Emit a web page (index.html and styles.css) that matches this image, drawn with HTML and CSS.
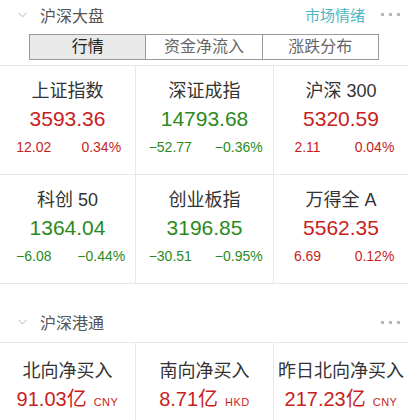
FILE: index.html
```html
<!DOCTYPE html>
<html lang="zh-CN">
<head>
    <meta charset="UTF-8">
    <meta name="viewport" content="width=device-width, initial-scale=1.0">
    <title>沪深大盘</title>
    <link rel="stylesheet" href="styles.css">
</head>
<body>
    <!-- 沪深大盘 -->
    <section class="panel">
        <div class="panel-head first">
            <svg class="chevron" width="9" height="6" viewBox="0 0 9 6"><polyline points="0.5,0.8 4.5,4.8 8.5,0.8" fill="none" stroke="#b5b5b5" stroke-width="1"/></svg>
            <span class="panel-title">沪深大盘</span>
            <a class="panel-link" href="#">市场情绪</a>
            <span class="more"><i></i><i></i><i></i></span>
        </div>

        <div class="tabs">
            <div class="tab active">行情</div>
            <div class="tab">资金净流入</div>
            <div class="tab">涨跌分布</div>
        </div>

        <div class="grid">
            <div class="cell">
                <div class="name">上证指数</div>
                <div class="price up">3593.36</div>
                <div class="change up"><span>12.02</span><span>0.34%</span></div>
            </div>
            <div class="cell">
                <div class="name">深证成指</div>
                <div class="price down">14793.68</div>
                <div class="change down"><span>&minus;52.77</span><span>&minus;0.36%</span></div>
            </div>
            <div class="cell">
                <div class="name">沪深 300</div>
                <div class="price up">5320.59</div>
                <div class="change up"><span>2.11</span><span>0.04%</span></div>
            </div>
            <div class="cell">
                <div class="name">科创 50</div>
                <div class="price down">1364.04</div>
                <div class="change down"><span>&minus;6.08</span><span>&minus;0.44%</span></div>
            </div>
            <div class="cell">
                <div class="name">创业板指</div>
                <div class="price down">3196.85</div>
                <div class="change down"><span>&minus;30.51</span><span>&minus;0.95%</span></div>
            </div>
            <div class="cell">
                <div class="name">万得全 A</div>
                <div class="price up">5562.35</div>
                <div class="change up"><span>6.69</span><span>0.12%</span></div>
            </div>
        </div>
    </section>

    <!-- 沪深港通 -->
    <section class="panel">
        <div class="panel-head">
            <svg class="chevron" width="9" height="6" viewBox="0 0 9 6"><polyline points="0.5,0.8 4.5,4.8 8.5,0.8" fill="none" stroke="#b5b5b5" stroke-width="1"/></svg>
            <span class="panel-title">沪深港通</span>
            <span class="more"><i></i><i></i><i></i></span>
        </div>

        <div class="grid flows">
            <div class="cell">
                <div class="name">北向净买入</div>
                <div class="amount up">91.03亿<small>CNY</small></div>
            </div>
            <div class="cell">
                <div class="name">南向净买入</div>
                <div class="amount up">8.71亿<small>HKD</small></div>
            </div>
            <div class="cell">
                <div class="name">昨日北向净买入</div>
                <div class="amount up">217.23亿<small>CNY</small></div>
            </div>
        </div>
    </section>
</body>
</html>
```

FILE: styles.css
```css
* {
    margin: 0;
    padding: 0;
    box-sizing: border-box;
}

body {
    font-family: "Liberation Sans", "Noto Sans CJK SC", sans-serif;
    background-color: #fff;
    color: #333;
    width: 408px;
    overflow: hidden;
}

/* Section header */
.panel-head {
    display: flex;
    align-items: center;
    height: 41px;
    padding: 0 8px 0 18px;
    border-bottom: 1px solid #e8e8e8;
    margin-top: 18px;
}

.panel-head.first {
    height: 29px;
    margin-top: 0;
    border-bottom: none;
}

.chevron {
    margin-right: 13px;
}

.panel-title {
    font-size: 16px;
    color: #555;
    flex: 1;
}

.panel-link {
    font-size: 15px;
    color: #4fb6c2;
    text-decoration: none;
    margin-right: 16px;
}

.more {
    display: flex;
    gap: 5px;
}

.more i {
    width: 3px;
    height: 3px;
    background-color: #b8b8b8;
}

/* Tabs */
.tabs {
    display: flex;
    margin: 5px 29px 0 29px;
    border: 1px solid #9a9a9a;
    height: 26px;
}

.tab {
    flex: 1;
    text-align: center;
    font-size: 16px;
    line-height: 24px;
    color: #666;
    border-left: 1px solid #9a9a9a;
}

.tab:first-child {
    border-left: none;
}

.tab.active {
    background-color: #e9e9e9;
    color: #222;
}

/* Quote grid */
.grid {
    display: grid;
    grid-template-columns: 136px 138px 1fr;
    margin-top: 5px;
    border-top: 1px solid #e8e8e8;
}

.cell {
    height: 109px;
    padding-top: 14px;
    border-right: 1px solid #e8e8e8;
    border-bottom: 1px solid #e8e8e8;
    text-align: center;
}

.cell:nth-child(3n) {
    border-right: none;
}

.name {
    font-size: 18px;
    line-height: 22px;
    color: #333;
}

.price {
    font-size: 21px;
    line-height: 26px;
    margin-top: 4px;
}

.change {
    display: flex;
    font-size: 14px;
    line-height: 18px;
    margin-top: 6px;
}

.change span {
    flex: 1;
    text-align: center;
}

.up {
    color: #c81e1e;
}

.down {
    color: #2a8a1e;
}

/* 沪深港通 */
.flows {
    margin-top: 0;
    border-top: none;
}

.flows .cell {
    padding-top: 17px;
}

.amount {
    font-size: 20px;
    line-height: 26px;
    margin-top: 4px;
}

.amount small {
    font-size: 11px;
    margin-left: 7px;
    letter-spacing: 0.5px;
}
```
